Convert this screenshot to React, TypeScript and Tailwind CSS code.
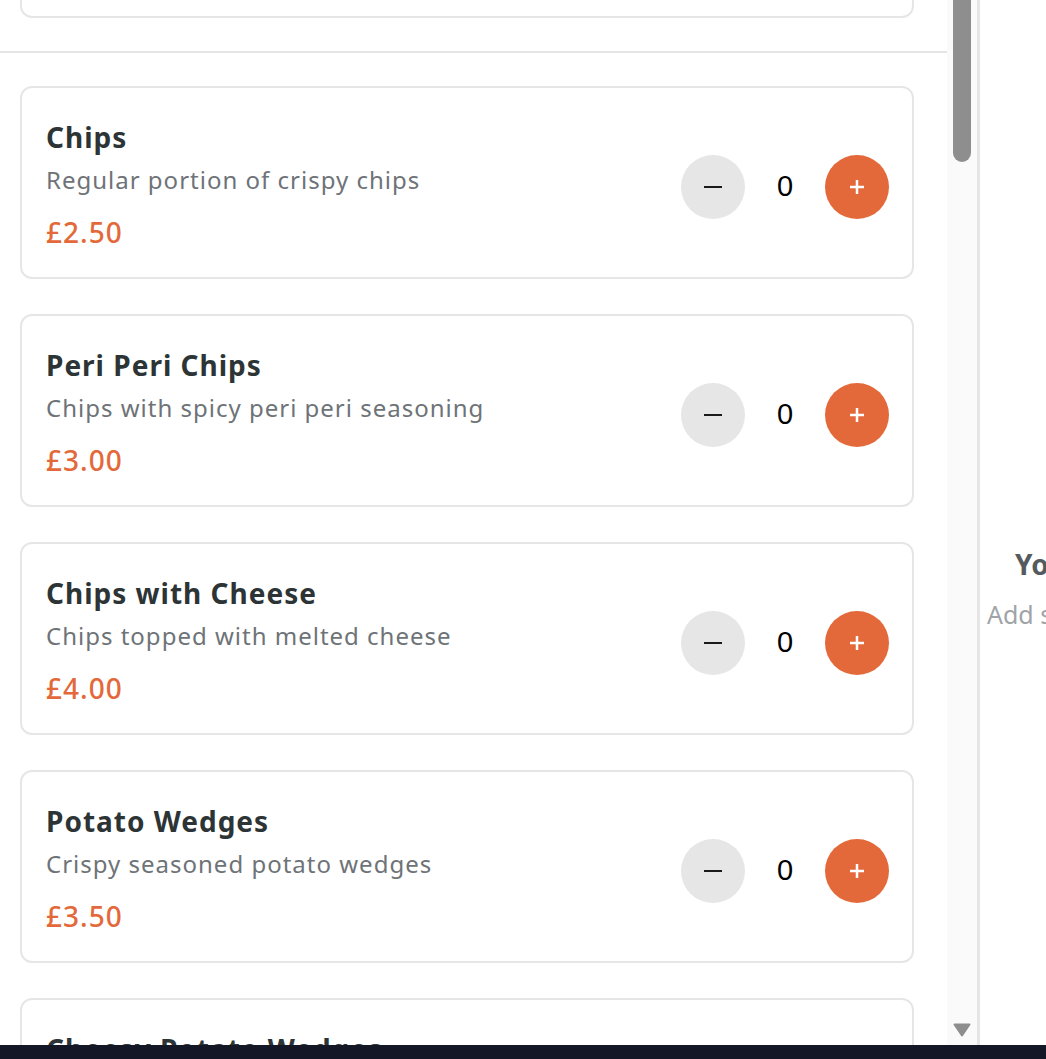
const items = [
  { name: "Fish Bites", description: "Bite sized pieces of battered fish", price: "£3.50" },
  { name: "Chips", description: "Regular portion of crispy chips", price: "£2.50" },
  { name: "Peri Peri Chips", description: "Chips with spicy peri peri seasoning", price: "£3.00" },
  { name: "Chips with Cheese", description: "Chips topped with melted cheese", price: "£4.00" },
  { name: "Potato Wedges", description: "Crispy seasoned potato wedges", price: "£3.50" },
  { name: "Cheesy Potato Wedges", description: "Potato wedges topped with cheese", price: "£4.50" },
];

const MenuCard = ({ item, top }: { item: (typeof items)[number]; top: string }) => {
  return (
    <div
      className={
        "ml-[20px] w-[894px] shrink-0 rounded-[12px] border-2 border-[#e6e6e6] bg-white flex justify-between items-start pl-[24px] pr-[23px] pt-[31px] pb-[27px] " +
        top
      }
    >
      <div className="flex flex-col">
        <h3 className="text-[28px] leading-[36px] font-bold tracking-[1px] text-[#2d3436]">{item.name}</h3>
        <p className="mt-[9px] text-[24px] leading-[32px] tracking-[1px] text-[#6e7377]">{item.description}</p>
        <p className="mt-[18px] text-[28px] leading-[36px] font-medium tracking-[1px] text-[#e4693a]">{item.price}</p>
      </div>
      <div className="mt-[36px] flex items-center">
        <button className="w-[64px] h-[64px] rounded-full bg-[#e6e6e6] flex items-center justify-center">
          <span className="block w-[18px] h-[2px] bg-[#1a1a1a]" />
        </button>
        <span className="w-[80px] text-center text-[29px] text-black font-['Liberation_Sans',Arial,sans-serif]">0</span>
        <button className="w-[64px] h-[64px] rounded-full bg-[#e4693a] flex items-center justify-center">
          <svg width="16" height="16" viewBox="0 0 16 16">
            <path d="M8 1v14M1 8h14" stroke="#fff" strokeWidth="2.5" />
          </svg>
        </button>
      </div>
    </div>
  );
};

export default function App() {
  return (
    <div className="h-[1059px] w-[1046px] flex flex-col overflow-hidden bg-white font-['Noto_Sans',sans-serif]">
      <div className="flex flex-1 min-h-0">
        <div className="w-[947px] shrink-0 flex flex-col overflow-hidden">
          <MenuCard item={items[0]} top="-mt-[175px]" />
          <div className="mt-[33px] h-[2px] w-full shrink-0 bg-[#e5e5e5]" />
          {items.slice(1).map((item, i) => (
            <MenuCard key={i} item={item} top={i === 0 ? "mt-[33px]" : "mt-[35px]"} />
          ))}
        </div>
        <div className="w-[30px] shrink-0 bg-[#fafafa] flex flex-col items-center justify-between pb-[8px]">
          <div className="w-[18px] h-[162px] rounded-b-[9px] bg-[#8e8e8e]" />
          <svg width="18" height="14" viewBox="0 0 18 14">
            <path d="M1.5 1.5h15L9 12.5z" fill="#8e8e8e" stroke="#8e8e8e" strokeWidth="2" strokeLinejoin="round" />
          </svg>
        </div>
        <div className="w-[3px] shrink-0 bg-[#e5e5e5]" />
        <div className="flex-1 overflow-hidden pt-[544px] whitespace-nowrap">
          <h2 className="pl-[35px] text-[28px] leading-[40px] font-bold text-[#555a5e]">Your cart is empty</h2>
          <p className="mt-[14px] pl-[7px] text-[25px] leading-[32px] text-[#a0a4a8]">Add some items to get started</p>
        </div>
      </div>
      <div className="h-[14px] shrink-0 bg-[#131726]" />
    </div>
  );
}
